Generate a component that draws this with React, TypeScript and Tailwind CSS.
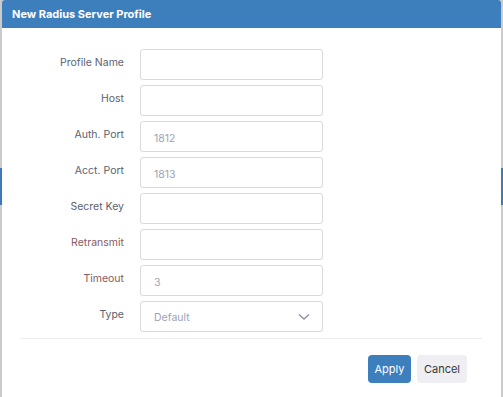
import React from "react";

const rows: { label: string; placeholder?: string; warn?: boolean; select?: boolean }[] = [
  { label: "Profile Name" },
  { label: "Host" },
  { label: "Auth. Port", placeholder: "1812" },
  { label: "Acct. Port", placeholder: "1813" },
  { label: "Secret Key" },
  { label: "Retransmit", warn: true },
  { label: "Timeout", placeholder: "3", warn: true },
  { label: "Type", placeholder: "Default", select: true },
];

export default function App() {
  return (
    <div
      className="relative h-[397px] w-[503px] overflow-hidden bg-[#cbcbcb]"
      style={{ fontFamily: "Inter, 'Open Sans', sans-serif" }}
    >
      <div className="mt-[168px] h-[37px] w-full bg-[#3f7ab3]" />
      <div className="absolute left-[2px] top-0 h-[400px] w-[499px] rounded-t-[3px] bg-white">
        <div className="flex h-[28px] items-center rounded-t-[3px] bg-[#3d7ebd] pl-[10px] text-[11px] font-bold text-white">
          New Radius Server Profile
        </div>
        <div className="flex flex-col gap-[5px] pt-[21px]">
          {rows.map((r) => (
            <div key={r.label} className="flex items-center">
              <div
                className={`w-[122px] pb-[4px] text-right text-[10.5px] ${
                  r.warn ? "text-[#8a5a60]" : "text-[#5b6270]"
                }`}
              >
                {r.label}
              </div>
              <div className="ml-[16px] flex h-[31px] w-[183px] items-center justify-between rounded-[3px] border border-[#d9d9de] pl-[13px] pr-[12px] text-[10.5px] text-[#9da3b6]">
                <span className={r.select ? "mt-[3px]" : "mt-[5px]"}>{r.placeholder ?? ""}</span>
                {r.select && (
                  <svg width="12" height="8" viewBox="0 0 12 8" fill="none">
                    <path d="M1 1.5l5 4.5 5-4.5" stroke="#8d93a8" strokeWidth="1.4" />
                  </svg>
                )}
              </div>
            </div>
          ))}
        </div>
        <div className="mx-[19px] mt-[6px] h-px bg-[#ececef]" />
        <div className="flex justify-end gap-[6px] pr-[34px] pt-[16px]">
          <button className="h-[28px] w-[43px] rounded-[4px] bg-[#3d7ebd] text-[11px] text-white">
            Apply
          </button>
          <button className="h-[28px] w-[50px] rounded-[4px] bg-[#efeff3] text-[11px] text-[#34363c]">
            Cancel
          </button>
        </div>
      </div>
    </div>
  );
}
